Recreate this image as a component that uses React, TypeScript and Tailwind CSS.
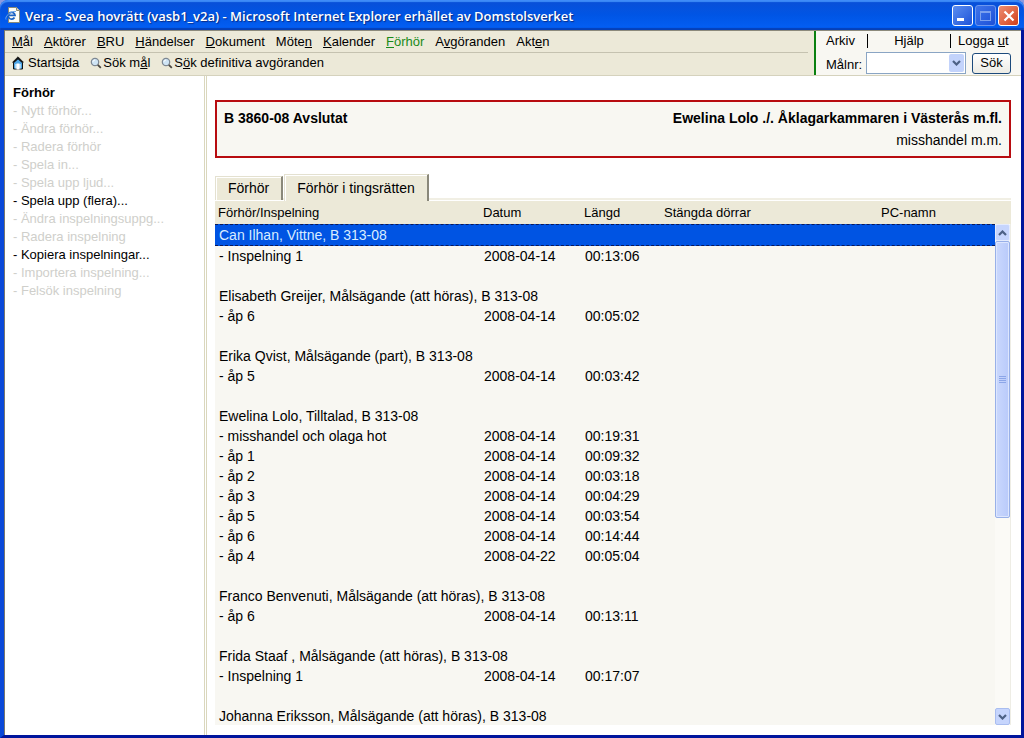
import React from "react";

type Entry = { name: string; date?: string; length?: string };

const menuItems: { before: string; key: string; after: string; active?: boolean }[] = [
  { before: "", key: "M", after: "ål" },
  { before: "", key: "A", after: "ktörer" },
  { before: "", key: "B", after: "RU" },
  { before: "", key: "H", after: "ändelser" },
  { before: "", key: "D", after: "okument" },
  { before: "Möte", key: "n", after: "" },
  { before: "", key: "K", after: "alender" },
  { before: "", key: "F", after: "örhör", active: true },
  { before: "A", key: "v", after: "göranden" },
  { before: "Akt", key: "e", after: "n" },
];

const sideItems: { label: string; enabled?: boolean }[] = [
  { label: "Nytt förhör..." },
  { label: "Ändra förhör..." },
  { label: "Radera förhör" },
  { label: "Spela in..." },
  { label: "Spela upp ljud..." },
  { label: "Spela upp (flera)...", enabled: true },
  { label: "Ändra inspelningsuppg..." },
  { label: "Radera inspelning" },
  { label: "Kopiera inspelningar...", enabled: true },
  { label: "Importera inspelning..." },
  { label: "Felsök inspelning" },
];

const groups: { title: string; entries: Entry[] }[] = [
  {
    title: "Can Ilhan, Vittne, B 313-08",
    entries: [{ name: "Inspelning 1", date: "2008-04-14", length: "00:13:06" }],
  },
  {
    title: "Elisabeth Greijer, Målsägande (att höras), B 313-08",
    entries: [{ name: "åp 6", date: "2008-04-14", length: "00:05:02" }],
  },
  {
    title: "Erika Qvist, Målsägande (part), B 313-08",
    entries: [{ name: "åp 5", date: "2008-04-14", length: "00:03:42" }],
  },
  {
    title: "Ewelina Lolo, Tilltalad, B 313-08",
    entries: [
      { name: "misshandel och olaga hot", date: "2008-04-14", length: "00:19:31" },
      { name: "åp 1", date: "2008-04-14", length: "00:09:32" },
      { name: "åp 2", date: "2008-04-14", length: "00:03:18" },
      { name: "åp 3", date: "2008-04-14", length: "00:04:29" },
      { name: "åp 5", date: "2008-04-14", length: "00:03:54" },
      { name: "åp 6", date: "2008-04-14", length: "00:14:44" },
      { name: "åp 4", date: "2008-04-22", length: "00:05:04" },
    ],
  },
  {
    title: "Franco Benvenuti, Målsägande (att höras), B 313-08",
    entries: [{ name: "åp 6", date: "2008-04-14", length: "00:13:11" }],
  },
  {
    title: "Frida Staaf , Målsägande (att höras), B 313-08",
    entries: [{ name: "Inspelning 1", date: "2008-04-14", length: "00:17:07" }],
  },
  { title: "Johanna Eriksson, Målsägande (att höras), B 313-08", entries: [] },
];

function PageIcon() {
  return (
    <svg width="16" height="16" viewBox="0 0 16 16" aria-hidden="true">
      <path d="M3.5.5h8l3 3v12h-11z" fill="#fdfdf6" stroke="#8a8a78" />
      <path d="M11.5.5v3h3" fill="#d8d8c8" stroke="#8a8a78" />
      <path d="M9.5 10.6A3.4 3.4 0 1 1 10 8.3H3.6" fill="none" stroke="#1b62c4" strokeWidth="1.8" />
      <path d="M1 12.5C-.5 9.500 6 3.500 11 4.500" fill="none" stroke="#6aa5ea" strokeWidth="1" />
    </svg>
  );
}

function HomeIcon() {
  return (
    <svg width="12" height="14" viewBox="0 0 12 14" aria-hidden="true">
      <path d="M1.500 6.500 6 2.500l4.500 4V13h-9z" fill="#4ea6e6" stroke="#111" />
      <path d="M6 .8.6 6.200h1.600L6 2.800l3.800 3.400h1.600z" fill="#111" stroke="#111" strokeWidth=".7" />
      <path d="M3 8h6v4.500H3z" fill="#a9d6f3" />
      <path d="M4.500 7.500h3V13.500h-3z" fill="#fff" />
    </svg>
  );
}

function SearchIcon() {
  return (
    <svg width="12" height="12" viewBox="0 0 12 12" aria-hidden="true">
      <circle cx="5" cy="5" r="3.700" fill="#cfe4f4" stroke="#7d8792" strokeWidth="1.200" />
      <path d="M3 4.800A2 2 0 0 1 5 3" fill="none" stroke="#fff" />
      <path d="m7.800 7.800 3 3" stroke="#4a4640" strokeWidth="1.800" />
    </svg>
  );
}

function Chevron({ up = false }: { up?: boolean }) {
  return (
    <svg width="9" height="6" viewBox="0 0 9 6" aria-hidden="true">
      <path d={up ? "M1 5l3.500-3.500L8 5" : "M1 1l3.500 3.500L8 1"} fill="none" stroke="#4d6185" strokeWidth="2.200" />
    </svg>
  );
}

function TitleBar() {
  return (
    <header className="flex h-[30px] shrink-0 items-center gap-1 rounded-t-lg bg-linear-to-b from-[#0a4fd6] via-[#0055e5] to-[#0460f5] pr-[5px] pl-[5px] shadow-[inset_0_2px_1px_#3f8cf8,inset_0_-2px_1px_#0540b8]">
      <PageIcon />
      <h1 className="flex-1 pt-0.5 font-['Open_Sans',sans-serif] text-[13px] leading-4 font-semibold whitespace-nowrap text-white [text-shadow:1px_1px_1px_#0a2a80]">
        Vera - Svea hovrätt (vasb1_v2a) - Microsoft Internet Explorer erhållet av Domstolsverket
      </h1>
      <div className="flex gap-[2px] pt-px">
        <button
          type="button"
          aria-label="Minimera"
          className="flex h-[21px] w-[21px] items-end rounded-[3px] border border-white bg-linear-to-br from-[#5c8df0] to-[#1f52d8] pb-1 pl-1"
        >
          <span className="h-[3px] w-[7px] bg-white" />
        </button>
        <button
          type="button"
          aria-label="Maximera"
          disabled
          className="flex h-[21px] w-[21px] items-center justify-center rounded-[3px] border border-[#6d97ee] bg-linear-to-br from-[#3f74ea] to-[#1c50d8]"
        >
          <span className="h-[10px] w-[11px] border border-t-2 border-[#7ba0ee]" />
        </button>
        <button
          type="button"
          aria-label="Stäng"
          className="flex h-[21px] w-[21px] items-center justify-center rounded-[3px] border border-white bg-linear-to-br from-[#ee8e70] to-[#d03c12]"
        >
          <svg width="12" height="12" viewBox="0 0 12 12" aria-hidden="true">
            <path d="M1.500 1.500l9 9M10.500 1.500l-9 9" stroke="#fff" strokeWidth="2.200" />
          </svg>
        </button>
      </div>
    </header>
  );
}

function Toolbar() {
  return (
    <div className="flex h-[46px] shrink-0 border-t border-b border-t-[#8c8a7c] border-b-[#d5d2bd] bg-[#ece9d8] text-[13px] leading-4">
      <div className="min-w-0 flex-1 pr-[6px]">
        <nav className="flex h-[22px] items-center gap-[11px] border-b border-[#c5c2b0] pl-[7px] whitespace-nowrap">
          {menuItems.map((m) => (
            <a key={m.before + m.key + m.after} href="#" className={m.active ? "text-[#1a8a1a]" : "text-black"}>
              {m.before}
              <u>{m.key}</u>
              {m.after}
            </a>
          ))}
        </nav>
        <nav className="flex h-[20px] items-center gap-[11px] pl-[7px] whitespace-nowrap">
          <a href="#" className="flex items-center gap-1">
            <HomeIcon />
            <span>
              Starts<u>i</u>da
            </span>
          </a>
          <a href="#" className="flex items-center gap-px">
            <SearchIcon />
            <span>
              Sök m<u>å</u>l
            </span>
          </a>
          <a href="#" className="flex items-center gap-px">
            <SearchIcon />
            <span>
              S<u>ö</u>k definitiva avgöranden
            </span>
          </a>
        </nav>
      </div>
      <div className="flex w-[207px] shrink-0 flex-col border-l-2 border-[#0a8010] bg-[#f8f7f2] pr-[10px] pl-[10px]">
        <nav className="flex h-[20px] items-center">
          <a href="#" className="w-[41px]">
            Arkiv
          </a>
          <span className="h-[14px] w-px bg-black" />
          <a href="#" className="flex-1 text-center">
            Hjälp
          </a>
          <span className="h-[14px] w-px bg-black" />
          <a href="#" className="w-[60px] pl-[7px]">
            Logga <u>u</u>t
          </a>
        </nav>
        <form className="flex h-[24px] items-center" onSubmit={(e) => e.preventDefault()}>
          <label htmlFor="malnr" className="w-10 pt-1">
            Målnr:
          </label>
          <div className="relative h-[22px] w-[100px]">
            <select
              id="malnr"
              className="h-full w-full appearance-none border border-[#8aa5c4] bg-white pl-1 text-[13px]"
            >
              <option></option>
            </select>
            <span className="pointer-events-none absolute inset-y-[2px] right-[2px] flex w-[15px] items-center justify-center rounded-[2px] bg-[#c3d3fb]">
              <Chevron />
            </span>
          </div>
          <button
            type="submit"
            className="ml-[6px] h-[21px] flex-1 rounded-[3px] border border-[#1c4a7c] bg-linear-to-b from-white to-[#ecebe4]"
          >
            Sök
          </button>
        </form>
      </div>
    </div>
  );
}

function Sidebar() {
  return (
    <aside className="w-[202px] shrink-0 border-r-3 border-double border-[#dad7bd] pt-2 pl-2 text-[13px] leading-[18px]">
      <h2 className="font-bold">Förhör</h2>
      <ul>
        {sideItems.map((s) => (
          <li key={s.label} className={s.enabled ? "text-black" : "text-[#cfcfcb]"}>
            - {s.enabled ? <a href="#">{s.label}</a> : <span>{s.label}</span>}
          </li>
        ))}
      </ul>
    </aside>
  );
}

function ScrollBar() {
  return (
    <div className="flex w-4 shrink-0 flex-col">
      <div className="h-6 border-t border-white bg-[#ece9d8]" />
      <div className="flex min-h-0 flex-1 flex-col border-r border-[#eeede5] bg-[#fbfaf6]" aria-hidden="true">
        <div className="flex h-[17px] shrink-0 items-center justify-center rounded-[2px] border border-[#e4ebfd] bg-[#c6d5fd]">
          <Chevron up />
        </div>
        <div className="flex h-[277px] flex-col items-center justify-center gap-px rounded-[2px] border border-[#98b0e8] bg-linear-to-r from-[#cad8fd] to-[#b9cafa] shadow-[inset_0_0_0_1px_#dde6fe]">
          <span className="h-px w-[7px] bg-[#8ca6e8]" />
          <span className="h-px w-[7px] bg-[#8ca6e8]" />
          <span className="h-px w-[7px] bg-[#8ca6e8]" />
          <span className="h-px w-[7px] bg-[#8ca6e8]" />
        </div>
        <div className="mt-auto flex h-[17px] shrink-0 items-center justify-center rounded-[2px] border border-[#a9bdf0] bg-[#c6d5fd]">
          <Chevron />
        </div>
      </div>
    </div>
  );
}

const headings = ["Förhör/Inspelning", "Datum", "Längd", "Stängda dörrar", "PC-namn"];

function Recordings() {
  return (
    <div className="flex min-h-0 flex-1 border-t-2 border-[#f1efe4] bg-[#f8f7f2]">
      <div className="min-w-0 flex-1 overflow-hidden">
        <table className="w-full table-fixed border-separate border-spacing-0 text-left text-[14px] leading-5">
          <colgroup>
            <col className="w-[265px]" />
            <col className="w-[101px]" />
            <col className="w-[80px]" />
            <col className="w-[217px]" />
            <col />
          </colgroup>
          <thead>
            <tr className="h-6 bg-[#ece9d8] text-[13px]">
              {headings.map((h) => (
                <th key={h} className="border-t border-white p-0 pl-[3px] font-normal">
                  {h}
                </th>
              ))}
            </tr>
          </thead>
          <tbody>
            {groups.map((g, i) => (
              <React.Fragment key={g.title}>
                <tr>
                  <td
                    colSpan={5}
                    className={
                      i === 0
                        ? "border-y border-dashed border-[#0a1a5a] bg-[#0054e3] p-0 pl-1 text-[#d8ecff]"
                        : "p-0 pl-1"
                    }
                  >
                    {g.title}
                  </td>
                </tr>
                {g.entries.map((e) => (
                  <tr key={e.name}>
                    <td className="p-0 pl-1">- {e.name}</td>
                    <td className="p-0 pl-1">{e.date}</td>
                    <td className="p-0 pl-1">{e.length}</td>
                    <td className="p-0" />
                    <td className="p-0" />
                  </tr>
                ))}
                {g.entries.length > 0 && (
                  <tr className="h-5">
                    <td colSpan={5} className="p-0" />
                  </tr>
                )}
              </React.Fragment>
            ))}
          </tbody>
        </table>
      </div>
      <ScrollBar />
    </div>
  );
}

function Main() {
  return (
    <main className="flex min-w-0 flex-1 flex-col pt-6 pr-[10px] pb-[10px] pl-2">
      <section className="flex h-[58px] shrink-0 justify-between border-2 border-[#b80c10] bg-[#f8f7f2] px-[7px] pt-[5px] text-[14px] leading-[22px]">
        <h2 className="font-bold">B 3860-08 Avslutat</h2>
        <div className="text-right">
          <p className="font-bold">Ewelina Lolo ./. Åklagarkammaren i Västerås m.fl.</p>
          <p>misshandel m.m.</p>
        </div>
      </section>
      <div role="tablist" className="relative mt-4 flex items-end gap-px text-[14px]">
        <button
          type="button"
          role="tab"
          aria-selected="false"
          className="-mb-[2px] h-[24px] border-t border-r-2 border-l border-t-[#e4e1d0] border-r-[#8a887a] border-l-[#e4e1d0] bg-[#ece9d8] px-3 shadow-[inset_1px_1px_0_#fff]"
        >
          Förhör
        </button>
        <button
          type="button"
          role="tab"
          aria-selected="true"
          className="-mb-[3px] h-[27px] border-t border-r-2 border-l border-t-[#e4e1d0] border-r-[#8a887a] border-l-[#e4e1d0] bg-[#ece9d8] px-3 shadow-[inset_1px_1px_0_#fff]"
        >
          Förhör i tingsrätten
        </button>
      </div>
      <Recordings />
    </main>
  );
}

export default function App() {
  return (
    <div className="flex h-screen flex-col overflow-hidden bg-[#8a9ae0] font-['Liberation_Sans',Arial,sans-serif] text-black">
      <TitleBar />
      <div className="flex min-h-0 flex-1 flex-col border-r-3 border-b-3 border-l-4 border-r-[#00159c] border-b-[#00159c] border-l-[#0a48d8] bg-white">
        <div className="flex min-h-0 flex-1 flex-col border-l border-[#77776e]">
          <Toolbar />
          <div className="flex min-h-0 flex-1">
            <Sidebar />
            <Main />
          </div>
        </div>
      </div>
    </div>
  );
}
